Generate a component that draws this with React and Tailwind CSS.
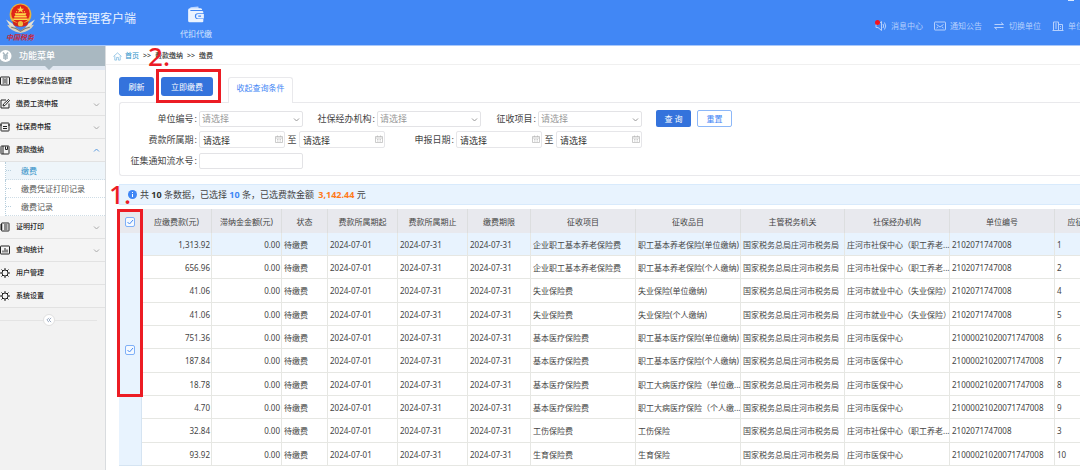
import React, { useState } from 'react';

const Icon = ({ className = 'size-[10px]', children, viewBox = '0 0 20 20', strokeWidth = 2 }) => (
  <svg
    className={`${className} shrink-0`}
    viewBox={viewBox}
    fill="none"
    stroke="currentColor"
    strokeWidth={strokeWidth}
    aria-hidden="true"
  >
    {children}
  </svg>
);

const ICONS = {
  list: (
    <>
      <rect x="1" y="2" width="18" height="16" rx="1" />
      <path d="M5 6h3M5 10h3M5 14h3M12 6h3M12 10h3M12 14h3M10 5v10" />
    </>
  ),
  edit: (
    <>
      <path d="M12 2H2v16h16V9" />
      <path d="M6 14l1-4 10-9 2 2-9 10z" />
    </>
  ),
  form: (
    <>
      <rect x="2" y="2" width="16" height="16" rx="1" />
      <path d="M0 6h4M16 6h4M6 9h8M6 13h8" />
    </>
  ),
  book: (
    <>
      <rect x="2" y="2" width="16" height="16" rx="1" />
      <path d="M6 2v16M11 3v6h4V3" />
    </>
  ),
  print: (
    <>
      <rect x="3" y="2" width="15" height="16" rx="1" />
      <path d="M0 6h5M0 10h5M0 14h5M8 6h7M8 10h7M8 14h7" />
    </>
  ),
  chart: (
    <>
      <rect x="1" y="2" width="18" height="16" rx="1" />
      <path d="M6 15v-4M10 15V6M14 15V9" />
    </>
  ),
  gear: (
    <>
      <circle cx="10" cy="10" r="6" />
      <path d="M10 0v4M10 16v4M0 10h4M16 10h4M3 3l3 3M14 14l3 3M17 3l-3 3M6 14l-3 3" />
    </>
  ),
};

const MENU = [
  { label: '职工参保信息管理', icon: 'list' },
  { label: '缴费工资申报', icon: 'edit', expandable: true },
  { label: '社保费申报', icon: 'form', expandable: true },
  { label: '费款缴纳', icon: 'book', expandable: true, children: ['缴费', '缴费凭证打印记录', '缴费记录'] },
  { label: '证明打印', icon: 'print', expandable: true },
  { label: '查询统计', icon: 'chart', expandable: true },
  { label: '用户管理', icon: 'gear' },
  { label: '系统设置', icon: 'gear' },
];

const COLUMNS = [
  { label: '应缴费款(元)', width: 'w-[70px]' },
  { label: '滞纳金金额(元)', width: 'w-[70px]' },
  { label: '状态', width: 'w-[46px]' },
  { label: '费款所属期起', width: 'w-[70px]' },
  { label: '费款所属期止', width: 'w-[70px]' },
  { label: '缴费期限', width: 'w-[63px]' },
  { label: '征收项目', width: 'w-[105px]' },
  { label: '征收品目', width: 'w-[105px]' },
  { label: '主管税务机关', width: 'w-[104px]' },
  { label: '社保经办机构', width: 'w-[105px]' },
  { label: '单位编号', width: 'w-[105px]' },
  { label: '应征', width: 'w-[42px]' },
];

const TAX_OFFICE = '国家税务总局庄河市税务局';
const PENSION = '庄河市社保中心（职工养老...';
const JOBS = '庄河市就业中心（失业保险）';
const MEDICAL = '庄河市医保中心';
const UNIT = '2102071747008';
const MEDICAL_UNIT = '21000021020071747008';

const ROWS = [
  ['1,313.92', '企业职工基本养老保险费', '职工基本养老保险(单位缴纳)', PENSION, UNIT, '1'],
  ['656.96', '企业职工基本养老保险费', '职工基本养老保险(个人缴纳)', PENSION, UNIT, '2'],
  ['41.06', '失业保险费', '失业保险(单位缴纳)', JOBS, UNIT, '4'],
  ['41.06', '失业保险费', '失业保险(个人缴纳)', JOBS, UNIT, '5'],
  ['751.36', '基本医疗保险费', '职工基本医疗保险(单位缴纳)', MEDICAL, MEDICAL_UNIT, '6'],
  ['187.84', '基本医疗保险费', '职工基本医疗保险(个人缴纳)', MEDICAL, MEDICAL_UNIT, '7'],
  ['18.78', '基本医疗保险费', '职工大病医疗保险（单位缴...', MEDICAL, MEDICAL_UNIT, '8'],
  ['4.70', '基本医疗保险费', '职工大病医疗保险（个人缴...', MEDICAL, MEDICAL_UNIT, '9'],
  ['32.84', '工伤保险费', '工伤保险', PENSION, UNIT, '3'],
  ['93.92', '生育保险费', '生育保险', MEDICAL, MEDICAL_UNIT, '10'],
];

const Emblem = () => (
  <svg className="h-[30px] w-[31px]" viewBox="0 0 60 58" aria-hidden="true">
    <path d="M2 32l13 8 6 8-11-3zM58 32l-13 8-6 8 11-3z" fill="#e6e2d4" />
    <path d="M4 42q14 2 26 12 12-10 26-12-6 12-26 16Q10 54 4 42z" fill="#d8d2c0" />
    <path d="M12 47q9 1 18 8 9-7 18-8" fill="none" stroke="#7d7a70" strokeWidth="2" />
    <circle cx="30" cy="22" r="21" fill="#e9b23c" />
    <circle cx="30" cy="21" r="18" fill="#e02418" />
    <path d="M30 6l2 5h5l-4 3 2 5-5-3-5 3 2-5-4-3h5z" fill="#ffd84a" />
    <path d="M18 25h24v3H18zM21 20h18l2 4H19zM16 30h28v3H16z" fill="#ffd84a" />
    <path d="M14 35q16 9 32 0l-3 8q-13 6-26 0z" fill="#d3261b" />
    <circle cx="30" cy="40" r="5" fill="#f0bd3f" />
    <path d="M22 16l1 2M38 16l-1 2M19 20l2 1M41 20l-2 1" stroke="#ffd84a" strokeWidth="2" />
  </svg>
);

const Header = () => (
  <header className="relative flex h-[46px] items-center overflow-hidden border-b border-[#a9c8fa] bg-[#4187f5] text-[#d5e5ff]">
    <div className="flex w-[40px] shrink-0 flex-col items-center">
      <Emblem />
      <span className="text-[7px] leading-[9px] font-bold text-[#c8283c] italic">中国税务</span>
    </div>
    <h1 className="mb-[7px] w-[140px] shrink-0 text-[12px] leading-[16px] whitespace-nowrap text-[#eaf2ff]">
      社保费管理客户端
    </h1>
    <a href="#withhold" className="flex shrink-0 flex-col items-center gap-[4px] text-[8px] leading-[12px]">
      <svg className="size-[18px]" viewBox="0 0 32 32" aria-hidden="true">
        <path d="M6 2l14-1 1 4H6z" fill="#bcd6ff" />
        <path d="M2 7q0-3 3-3h19q3 0 3 3H6v2h21q2 0 2 2v2H19q-5 0-5 5t5 5h10v4q0 2-2 2H5q-3 0-3-3z" fill="#eaf3ff" />
        <path d="M30 14H20q-4 0-4 4t4 4h10zM20 17h5v2h-5z" fill="#eaf3ff" fillRule="evenodd" />
      </svg>
      代扣代缴
    </a>
    <nav className="mt-[7px] ml-auto flex gap-[11px] text-[8px] leading-[12px] whitespace-nowrap text-[#b5d0fd]">
      <a href="#messages" className="relative flex items-center gap-[4px]">
        <Icon className="size-[12px]" viewBox="0 0 24 24">
          <path d="M2 9h4l7-6v18l-7-6H2zM16 8q3 4 0 8M19 5q5 7 0 14" />
        </Icon>
        <span className="absolute top-0 left-0 size-[5px] rounded-full bg-[#f5141e]" />
        消息中心
      </a>
      <a href="#notices" className="flex items-center gap-[4px]">
        <Icon className="size-[12px]" viewBox="0 0 24 24">
          <rect x="1" y="4" width="22" height="16" rx="1" />
          <path d="M5 9l7 5 7-5M5 16l3-2M19 16l-3-2" />
        </Icon>
        通知公告
      </a>
      <a href="#switch" className="flex items-center gap-[4px]">
        <Icon className="size-[12px]" viewBox="0 0 24 24">
          <path d="M3 9h18l-5-4M21 15H3l5 4" />
        </Icon>
        切换单位
      </a>
      <a href="#unit" className="flex items-center gap-[4px]">
        <Icon className="size-[12px]" viewBox="0 0 24 24">
          <path d="M3 21V4h10v17M13 9h8v12M1 21h22M6 8h4M6 12h4M6 16h4M16 13h2M16 17h2" />
        </Icon>
        <span className="w-[12px] overflow-hidden">单位</span>
      </a>
    </nav>
    <span className="absolute top-0 right-[6px] h-px w-[6px] bg-[#dbe9ff]" />
  </header>
);

const Chevron = ({ up, className = 'size-[7px]' }) => (
  <Icon className={className} viewBox="0 0 14 14">
    <path d={up ? 'M2 9l5-5 5 5' : 'M2 5l5 5 5-5'} />
  </Icon>
);

const Sidebar = () => (
  <aside className="w-[106px] shrink-0 border-r border-[#d9dcdf] bg-[#f2f2f2]">
    <div className="relative flex h-[20px] items-center bg-[#a9b8c1] text-white">
      <svg className="size-[12px]" viewBox="0 0 24 24" aria-hidden="true">
        <circle cx="11" cy="12" r="12" fill="#fff" />
        <path d="M6 5l5 7 5-7M11 12v8M6 12h10M6 16h10" fill="none" stroke="#a9b8c1" strokeWidth="3" />
      </svg>
      <h2 className="ml-[7px] text-[9px] leading-[12px] font-medium">功能菜单</h2>
      <svg className="absolute top-full left-[45px] h-[4px] w-[8px]" viewBox="0 0 8 4" aria-hidden="true">
        <path d="M0 0h8L4 4z" fill="#a9b8c1" />
      </svg>
    </div>
    <div className="h-[4px] bg-[#e1e8f1]" />
    <ul className="text-[7px] text-[#222]">
      {MENU.map((item) => (
        <li key={item.label}>
          <a href="#menu" className="flex h-[23px] items-center border-b border-[#e2e2e2] bg-[#f4f4f4] pr-[5px]">
            <Icon className="size-[10px]">{ICONS[item.icon]}</Icon>
            <span className="ml-[6px] font-medium">{item.label}</span>
            {item.expandable && (
              <span className={`ml-auto ${item.children ? 'text-[#5a9be0]' : 'text-[#aaa]'}`}>
                <Chevron up={!!item.children} className="size-[7px]" />
              </span>
            )}
          </a>
          {item.children && (
            <ul className="bg-white pl-[5px] text-[8px] text-[#555]">
              {item.children.map((child, i) => (
                <li key={child} className="border-l border-dotted border-[#b8cfdd]">
                  <a
                    href="#submenu"
                    className={`flex h-[18px] items-center gap-[10px] border-b border-dotted border-[#cfdde6] ${
                      i === 0 ? 'bg-[#eef5fa] text-[#2f8fc7]' : ''
                    }`}
                  >
                    <span className="w-[5px] border-t border-dotted border-[#b8cfdd]" />
                    {child}
                  </a>
                </li>
              ))}
            </ul>
          )}
        </li>
      ))}
    </ul>
    <div className="mt-[6px] flex items-center">
      <span className="h-px grow bg-[#e4e4e4]" />
      <button
        type="button"
        aria-label="收起菜单"
        className="flex size-[12px] items-center justify-center rounded-full border border-[#e0e0e0] bg-white text-[#8fa0bb]"
      >
        <Icon className="size-[6px]" viewBox="0 0 14 14">
          <path d="M7 2L2 7l5 5M12 2L7 7l5 5" />
        </Icon>
      </button>
      <span className="mr-[8px] h-px grow bg-[#e4e4e4]" />
    </div>
  </aside>
);

const Label = ({ htmlFor, width, children }) => (
  <label htmlFor={htmlFor} className={`${width} flex shrink-0 justify-end gap-px pr-[2px]`}>
    {children}
    <span>:</span>
  </label>
);

const Select = ({ id }) => (
  <div className="relative w-[104px] shrink-0 text-[#999]">
    <select id={id} className="block h-[16px] w-full appearance-none rounded-[2px] border border-[#e3e3e6] bg-white pl-[2px]">
      <option>请选择</option>
    </select>
    <Chevron className="pointer-events-none absolute top-[5px] right-[3px] size-[7px]" />
  </div>
);

const DateInput = ({ id, label }) => (
  <div className="relative w-[86px] shrink-0 text-[#bbb]">
    <input
      id={id}
      type="text"
      aria-label={label}
      placeholder="请选择"
      className="block h-[17px] w-full rounded-[2px] border border-[#e6e6e9] pt-px pl-[3px] text-[#333] placeholder:text-[#333]"
    />
    <Icon className="pointer-events-none absolute top-[4px] right-[2px] size-[8px]" viewBox="0 0 16 16" strokeWidth={1.5}>
      <path d="M1 3h14v12H1zM1 6h14M5 1v3M11 1v3M4 9h2M7 9h2M10 9h2M4 12h2M7 12h2M10 12h2" />
    </Icon>
  </div>
);

const SearchForm = () => (
  <form className="flex flex-col gap-[4px] rounded-l-[3px] border border-r-0 border-[#e9e9ec] pt-[7px] pb-[6px] text-[9px] leading-[13px] whitespace-nowrap text-[#444]">
    <div className="flex h-[17px] items-center">
      <Label htmlFor="unit" width="w-[79px]">单位编号</Label>
      <Select id="unit" />
      <Label htmlFor="agency" width="w-[74px]">社保经办机构</Label>
      <Select id="agency" />
      <Label htmlFor="item" width="w-[57px]">征收项目</Label>
      <Select id="item" />
      <button type="button" className="ml-[14px] h-[17px] w-[35px] rounded-[2px] bg-[#3473dc] text-[8px] text-white">
        查 询
      </button>
      <button
        type="reset"
        className="ml-[6px] h-[17px] w-[35px] rounded-[2px] border border-[#8db8f8] bg-white text-[8px] text-[#3f86f5]"
      >
        重置
      </button>
    </div>
    <div className="flex h-[17px] items-center">
      <Label htmlFor="period-from" width="w-[79px]">费款所属期</Label>
      <DateInput id="period-from" label="费款所属期起" />
      <span className="w-[14px] shrink-0 text-center">至</span>
      <DateInput id="period-to" label="费款所属期止" />
      <Label htmlFor="report-from" width="w-[71px]">申报日期</Label>
      <DateInput id="report-from" label="申报日期起" />
      <span className="w-[14px] shrink-0 text-center">至</span>
      <DateInput id="report-to" label="申报日期止" />
    </div>
    <div className="flex h-[17px] items-center">
      <Label htmlFor="serial" width="w-[79px]">征集通知流水号</Label>
      <input id="serial" type="text" className="h-[16px] w-[104px] rounded-[2px] border border-[#e3e3e6] px-[3px]" />
    </div>
  </form>
);

const Checkbox = ({ label, checked, onChange }) => (
  <span className="relative inline-block size-[10px] align-middle">
    <input
      type="checkbox"
      aria-label={label}
      checked={checked}
      onChange={onChange}
      className="block size-[10px] appearance-none rounded-[2px] border border-[#7fb0f7] bg-[#f4f9ff]"
    />
    {checked && (
      <Icon className="pointer-events-none absolute inset-0 size-[10px] text-[#4a8cf2]" viewBox="0 0 20 20">
        <path d="M5 10l4 4 7-8" />
      </Icon>
    )}
  </span>
);

const PaymentTable = () => {
  const [checked, setChecked] = useState(true);
  const toggle = () => setChecked(!checked);

  const cell = 'border-r border-b border-[#e6e7e3] p-0 pt-px pl-[2px]';
  const money = 'border-r border-b border-[#e6e7e3] p-0 pt-px pr-px text-right';

  return (
    <div className="overflow-hidden">
      <table className="w-[978px] table-fixed border-separate border-spacing-0 text-[8px] leading-[12px] whitespace-nowrap text-[#444]">
        <thead>
          <tr className="h-[24px] bg-[#e8e9ee]">
            <th className="w-[23px] border-r border-[#dcdedf] p-0">
              <Checkbox label="全选" checked={checked} onChange={toggle} />
            </th>
            {COLUMNS.map((col) => (
              <th key={col.label} className={`${col.width} border-r border-[#dcdedf] p-0 pt-px text-center font-normal`}>
                {col.label}
              </th>
            ))}
          </tr>
        </thead>
        <tbody className="[&>tr]:h-[23px] [&>tr:nth-child(3n)]:h-[24px]">
          {ROWS.map(([amount, item, subItem, agency, unit, seq], i) => (
            <tr key={seq} className={i === 0 ? 'bg-[#e8f3fe]' : 'bg-white'}>
              {i === 0 && (
                <td rowSpan={ROWS.length} className="border-r border-b border-[#d5e4f2] bg-[#e8f3fe] p-0 text-center">
                  <Checkbox label="选择本组" checked={checked} onChange={toggle} />
                </td>
              )}
              <td className={money}>{amount}</td>
              <td className={money}>0.00</td>
              <td className={cell}>待缴费</td>
              <td className={cell}>2024-07-01</td>
              <td className={cell}>2024-07-31</td>
              <td className={cell}>2024-07-31</td>
              <td className={cell}>{item}</td>
              <td className={cell}>{subItem}</td>
              <td className={cell}>{TAX_OFFICE}</td>
              <td className={cell}>{agency}</td>
              <td className={cell}>{unit}</td>
              <td className={cell}>{seq}</td>
            </tr>
          ))}
        </tbody>
      </table>
    </div>
  );
};

// red frame with a step number above it
const Marker = ({ step, frame, number }) => (
  <>
    <span className={`pointer-events-none absolute border-[3px] border-[#ec1c24] ${frame}`} />
    <span
      className={`pointer-events-none absolute text-[26px] leading-[26px] font-medium text-[#ec1c24] ${number}`}
    >
      {step}.
    </span>
  </>
);

const App = () => (
  <div className="flex min-h-screen flex-col overflow-hidden bg-white font-['Noto_Sans','Noto_Sans_CJK_SC',sans-serif]">
    <Header />
    <div className="flex grow">
      <Sidebar />
      <main className="min-w-0 grow">
        <nav className="flex h-[19px] items-center gap-[3px] border-b border-[#f0f0f0] pt-[2px] pl-[7px] text-[7px] text-[#333]">
          <Icon className="size-[9px] text-[#6fb1dc]" strokeWidth={1.5}>
            <path d="M1 10l9-8 9 8M4 9v9h4v-6h4v6h4V9" />
          </Icon>
          <a href="#home" className="text-[#1e90c8]">首页</a>
          <span className="px-px">&gt;&gt;</span>
          <span className="font-medium">费款缴纳</span>
          <span className="px-px">&gt;&gt;</span>
          <span className="font-medium">缴费</span>
        </nav>
        <div className="pl-[13px]">
          <div className="relative pt-[12px]">
            <div className="flex items-start text-[8px] leading-[12px]">
              <button type="button" className="h-[19px] w-[35px] rounded-[3px] bg-[#3473dc] text-white">刷新</button>
              <button type="button" className="ml-[7px] h-[19px] w-[52px] rounded-[3px] bg-[#3473dc] text-white">
                立即缴费
              </button>
              <button
                type="button"
                className="relative -mb-px ml-[15px] h-[26px] w-[65px] rounded-t-[3px] border border-b-0 border-[#e9e9ec] bg-white pb-[6px] text-[#3f86f5]"
              >
                收起查询条件
              </button>
            </div>
            <SearchForm />
            <Marker step={2} frame="top-[4px] left-[37px] h-[34px] w-[65px]" number="-top-[22px] left-[29px]" />
          </div>
          <div className="mt-[8px] flex h-[21px] items-center gap-[3px] border border-r-0 border-[#d8eafc] bg-[#e8f3fe] pl-[8px] text-[9px] leading-[13px] whitespace-nowrap text-[#444]">
            <svg className="size-[9px]" viewBox="0 0 18 18" aria-hidden="true">
              <circle cx="9" cy="9" r="9" fill="#3f86f5" />
              <path d="M9 4v2M9 8v6" stroke="#fff" strokeWidth="2" />
            </svg>
            <p>
              共 <b className="text-[#333]">10</b> 条数据，已选择 <b className="text-[#3f86f5]">10</b> 条，已选费款金额{' '}
              <b className="ml-[2px] text-[#ff7a1a]">3,142.44</b> 元
            </p>
          </div>
          <div className="relative mt-[4px]">
            <PaymentTable />
            <Marker step={1} frame="top-0 -left-[2px] h-[188px] w-[26px]" number="-top-[28px] -left-[10px]" />
          </div>
        </div>
      </main>
    </div>
  </div>
);

export default App;
